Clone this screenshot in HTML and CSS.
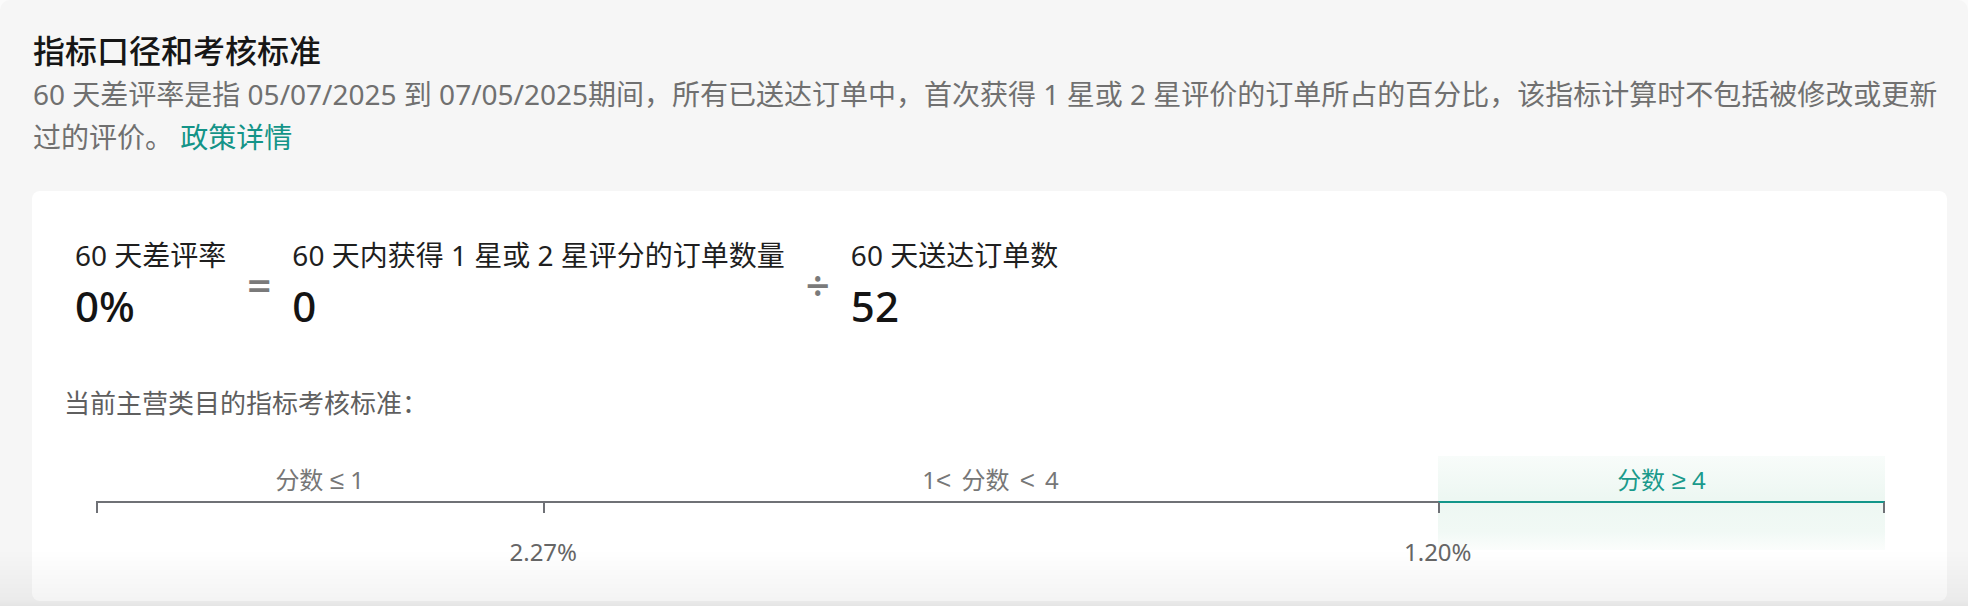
FILE: index.html
```html
<!DOCTYPE html>
<html lang="zh-CN">
<head>
  <meta charset="UTF-8" />
  <meta name="viewport" content="width=device-width, initial-scale=1.0"/>
  <title>指标口径和考核标准</title>
  <link rel="stylesheet" href="styles.css">
</head>
<body>

  <div class="page">
    <h2 class="title">指标口径和考核标准</h2>
    <p class="desc">60 天差评率是指 05/07/2025 到 07/05/2025期间，所有已送达订单中，首次获得 1 星或 2 星评价的订单所占的百分比，该指标计算时不包括被修改或更新过的评价。 <a class="link" href="#">政策详情</a></p>

    <div class="card">
      <!-- Formula -->
      <div class="formula">
        <div class="term">
          <div class="term-label">60 天差评率</div>
          <div class="term-value">0%</div>
        </div>
        <div class="op">=</div>
        <div class="term">
          <div class="term-label">60 天内获得 1 星或 2 星评分的订单数量</div>
          <div class="term-value">0</div>
        </div>
        <div class="op">÷</div>
        <div class="term">
          <div class="term-label">60 天送达订单数</div>
          <div class="term-value">52</div>
        </div>
      </div>

      <div class="subhead">当前主营类目的指标考核标准：</div>

      <!-- Score scale -->
      <div class="scale">
        <div class="seg">
          <div class="seg-label">分数 <span class="sym">≤</span> 1</div>
          <div class="seg-rule"></div>
          <div class="seg-value"><span>2.27%</span></div>
        </div>
        <div class="seg">
          <div class="seg-label seg-label-wide">1<span class="sym">&lt;</span> 分数 <span class="sym">&lt;</span> 4</div>
          <div class="seg-rule"></div>
          <div class="seg-value"><span>1.20%</span></div>
        </div>
        <div class="seg seg-active">
          <div class="seg-label">分数 <span class="sym">≥</span> 4</div>
          <div class="seg-rule"></div>
        </div>
      </div>
    </div>
  </div>

  <div class="fade"></div>

</body>
</html>
```

FILE: styles.css
```css
* {
  box-sizing: border-box;
  margin: 0;
  padding: 0;
}

body {
  font-family: "Noto Sans", "Noto Sans CJK SC", sans-serif;
  background: #fbfbfb;
  color: #1a1a1a;
  height: 606px;
  overflow: hidden;
}

.page {
  background: #f6f6f6;
  border-radius: 10px 10px 0 0;
  padding: 31px 21px 0 33px;
  height: 606px;
}

.title {
  font-size: 32px;
  font-weight: 500;
  line-height: 40px;
  color: #161616;
}

.desc {
  margin-top: 2px;
  font-size: 28px;
  line-height: 43px;
  color: #707070;
}

.link {
  color: #149488;
  text-decoration: none;
}

.card {
  margin-top: 32px;
  margin-left: -1px;
  height: 410px;
  background: #fff;
  border-radius: 8px;
  padding: 46px 32px 0 32px;
}

.formula {
  display: flex;
  align-items: center;
  gap: 21px;
  padding-left: 11px;
}

.term-label {
  font-size: 28px;
  line-height: 36px;
  color: #1f1f1f;
}

.term-value {
  margin-top: 8px;
  font-size: 42px;
  line-height: 50px;
  font-weight: 500;
  color: #141414;
}

.op {
  font-size: 42px;
  line-height: 50px;
  font-weight: 600;
  color: #7a7a7a;
  margin-top: 2px;
}

.subhead {
  margin-top: 55px;
  font-size: 26px;
  line-height: 34px;
  color: #5f5f5f;
}

.scale {
  display: grid;
  grid-template-columns: 1fr 2fr 1fr;
  margin: 36px 30px 0 32px;
}

.seg {
  padding-top: 8px;
}

.seg-label {
  font-size: 24px;
  line-height: 32px;
  text-align: center;
  color: #777;
}

.seg-label-wide {
  word-spacing: 4px;
}

.sym {
  font-family: "Liberation Sans", sans-serif;
  font-size: 26px;
}

.seg-rule {
  margin-top: 5px;
  height: 12px;
  border-top: 2px solid #6f7176;
  border-left: 2px solid #6f7176;
}

.seg-value {
  margin-top: 23px;
  font-size: 24px;
  line-height: 32px;
  text-align: right;
  color: #666;
}

.seg-value span {
  display: inline-block;
  transform: translateX(50%);
}

.seg-active {
  background: linear-gradient(180deg, #f8fcfa 0%, #edf7f2 45%, #f1f9f5 80%, #fbfdfc 100%) top / 100% 94px no-repeat;
}

.seg-active .seg-label {
  color: #1a9a8c;
}

.seg-active .seg-rule {
  border-top-color: #12968a;
  border-right: 2px solid #6f7176;
}

.fade {
  position: fixed;
  left: 0;
  right: 0;
  bottom: 0;
  height: 56px;
  background: linear-gradient(180deg, rgba(0, 0, 0, 0) 0%, rgba(0, 0, 0, 0.045) 88%, rgba(0, 0, 0, 0.07) 100%);
  pointer-events: none;
}
```
